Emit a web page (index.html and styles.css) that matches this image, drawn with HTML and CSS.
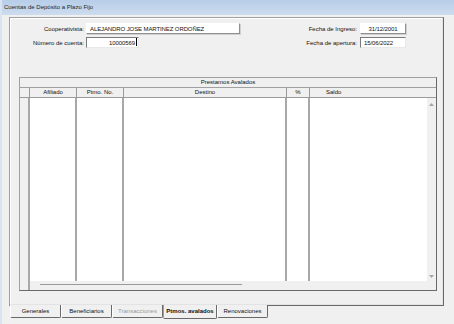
FILE: index.html
```html
<!DOCTYPE html>
<html lang="es">
<head>
    <meta charset="UTF-8">
    <title>Cuentas de Depósito a Plazo Fijo</title>
    <link rel="stylesheet" href="styles.css">
</head>
<body>
    <div class="window">
        <div class="titlebar">Cuentas de Depósito a Plazo Fijo</div>

        <div class="client">
            <div class="panel">
                <div class="head">
                    <div class="fields fields-left">
                        <label>Cooperativista:</label>
                        <span class="box raised box-name">ALEJANDRO JOSE MARTINEZ ORDOÑEZ</span>
                        <label>Número de cuenta:</label>
                        <span class="box sunken box-num">10000569<i class="caret"></i></span>
                    </div>
                    <div class="fields fields-right">
                        <label>Fecha de Ingreso:</label>
                        <span class="box raised box-date center">31/12/2001</span>
                        <label>Fecha de apertura:</label>
                        <span class="box sunken box-date">15/06/2022</span>
                    </div>
                </div>

                <div class="grid">
                    <div class="grid-title">Prestamos Avalados</div>
                    <div class="row header">
                        <div class="cell c-sel"></div>
                        <div class="cell c-afil">Afiliado</div>
                        <div class="cell c-ptmo">Ptmo. No.</div>
                        <div class="cell c-dest">Destino</div>
                        <div class="cell c-pct">%</div>
                        <div class="cell c-saldo-h">Saldo</div>
                    </div>
                    <div class="row body">
                        <div class="cell c-sel"></div>
                        <div class="cell c-afil"></div>
                        <div class="cell c-ptmo"></div>
                        <div class="cell c-dest"></div>
                        <div class="cell c-pct"></div>
                        <div class="cell c-saldo"></div>
                        <div class="vscroll">
                            <svg class="arrow" width="5" height="3" viewBox="0 0 5 3"><path d="M0 3 L2.5 0 L5 3 Z" fill="#a6a6a6"/></svg>
                            <svg class="arrow" width="5" height="3" viewBox="0 0 5 3"><path d="M0 0 L2.5 3 L5 0 Z" fill="#a6a6a6"/></svg>
                        </div>
                    </div>
                    <div class="hscroll">
                        <div class="c-sel"></div>
                        <div class="hbar"><span class="thumb"></span></div>
                    </div>
                </div>
            </div>

            <div class="tabs">
                <div class="tab">Generales</div>
                <div class="tab">Beneficiarios</div>
                <div class="tab disabled">Transacciones</div>
                <div class="tab active">Ptmos. avalados</div>
                <div class="tab">Renovaciones</div>
            </div>
        </div>
    </div>
</body>
</html>
```

FILE: styles.css
```css
body {
    margin: 0;
    background-color: #f0f0f0;
    font-family: "Liberation Sans", Arial, sans-serif;
    font-size: 6px;
    color: #111;
}
.window {
    width: 454px;
    height: 324px;
    border-left: 2px solid #d9e4f1;
    box-sizing: border-box;
    overflow: hidden;
}
.titlebar {
    height: 15px;
    line-height: 15px;
    padding-left: 2px;
    background: linear-gradient(#b7cde8, #cddcee);
    color: #1e1e1e;
}
.client {
    padding-top: 2px;
    padding-left: 7px;
}
.panel {
    width: 435px;
    height: 289px;
    box-sizing: border-box;
    border: 1px solid #a0a0a0;
    border-right-color: #696969;
    border-bottom-color: #696969;
    box-shadow: inset -1px -1px 0 #e3e3e3, inset 1px 1px 0 #fff;
}
.head {
    display: flex;
    padding-top: 5px;
}
.fields {
    display: grid;
    row-gap: 3px;
    align-items: center;
}
.fields label {
    text-align: right;
}
.fields-left {
    grid-template-columns: 74px auto;
    column-gap: 2px;
    align-self: flex-start;
}
.fields-right {
    grid-template-columns: auto 46px;
    column-gap: 3px;
    margin-left: auto;
    margin-right: 37px;
    align-self: flex-start;
}
.box {
    display: block;
    height: 11px;
    line-height: 11px;
    box-sizing: border-box;
    background: #fff;
    padding: 0 3px;
    white-space: nowrap;
    letter-spacing: -0.1px;
}
.raised {
    border: 1px solid #fff;
    border-right-color: #909090;
    border-bottom-color: #909090;
    box-shadow: 1px 1px 0 #d0d0d0;
}
.sunken {
    border: 1px solid #7a7a7a;
    border-right-color: #e8e8e8;
    border-bottom-color: #e8e8e8;
}
.box-name {
    width: 154px;
}
.box-num {
    width: 53px;
    text-align: right;
    padding-right: 1px;
}
.caret {
    display: inline-block;
    width: 1px;
    height: 8px;
    margin-left: 1px;
    vertical-align: -1px;
    background: #000;
}
.box-date {
    width: 46px;
}
.center {
    text-align: center;
}
.grid {
    margin-left: 9px;
    width: 418px;
    height: 214px;
    box-sizing: border-box;
    margin-top: 29px;
    border: 1px solid #a0a0a0;
    border-right-color: #696969;
    border-bottom-color: #696969;
    display: flex;
    flex-direction: column;
}
.grid-title {
    height: 10px;
    line-height: 9px;
    box-sizing: border-box;
    text-align: center;
    border-bottom: 1px solid #a0a0a0;
    background: #f0f0f0;
}
.row {
    display: flex;
}
.cell {
    box-sizing: border-box;
    border-right: 1px solid #9a9a9a;
    text-align: center;
    flex-shrink: 0;
}
.header {
    height: 10px;
    line-height: 9px;
    border-bottom: 1px solid #9a9a9a;
    box-sizing: border-box;
}
.c-sel { width: 10px; background: #f0f0f0; }
.c-afil { width: 47px; }
.c-ptmo { width: 47px; }
.c-dest { width: 163px; }
.c-pct { width: 23px; }
.c-saldo { width: 117px; border-right: none; }
.c-saldo-h {
    flex: 1;
    border-right: none;
    text-align: left;
    padding-left: 16px;
}
.body {
    flex: 1;
    background: #fff;
}
.body .cell {
    border-right-width: 2px;
    border-right-color: #a8a8a8;
}
.body .c-saldo {
    border-right: none;
}
.vscroll {
    width: 9px;
    background: #f0f0f0;
    display: flex;
    flex-direction: column;
    justify-content: space-between;
    align-items: center;
    padding: 5px 0 3px;
    box-sizing: border-box;
}
.arrow {
    display: block;
}
.hscroll {
    height: 9px;
    display: flex;
}
.hscroll .c-sel {
    border-right: 2px solid #a8a8a8;
    box-sizing: border-box;
}
.hbar {
    flex: 1;
    background: #f0f0f0;
    position: relative;
}
.thumb {
    position: absolute;
    left: 10px;
    top: 3px;
    width: 202px;
    height: 1px;
    background: #9a9a9a;
}
.tabs {
    display: flex;
    margin-left: 1px;
    margin-top: -1px;
}
.tab {
    width: 51px;
    height: 13px;
    line-height: 12px;
    box-sizing: border-box;
    text-align: center;
    border-left: 1px solid #fff;
    border-right: 1px solid #696969;
    border-bottom: 1px solid #696969;
    border-radius: 0 0 2px 2px;
    background: #f0f0f0;
    white-space: nowrap;
}
.tab.disabled {
    color: #9a9a9a;
}
.tab.active {
    width: 54px;
    height: 14px;
    font-weight: bold;
    border-left: 1px solid #a0a0a0;
}
```
